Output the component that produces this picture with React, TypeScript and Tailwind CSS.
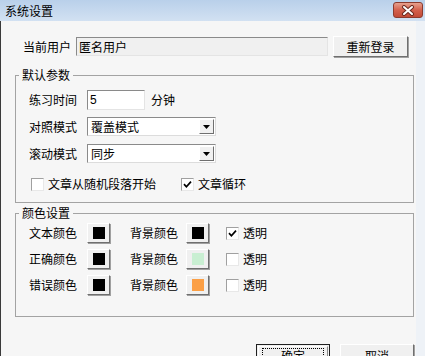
const Check = ({ checked }: { checked?: boolean }) => (
  <span className="flex h-[13px] w-[13px] shrink-0 items-center justify-center border border-t-[#a0a0a0] border-l-[#a0a0a0] border-r-[#e8e8e8] border-b-[#e8e8e8] bg-white">
    {checked && (
      <svg width="9" height="9" viewBox="0 0 9 9">
        <path d="M1 4.2 L3.4 6.8 L8 1.6" stroke="#000" strokeWidth="1.7" fill="none" />
      </svg>
    )}
  </span>
)

const Select = ({ value }: { value: string }) => (
  <div className="flex h-[19px] w-[129px] items-center border border-t-[#8a8a8a] border-l-[#8a8a8a] border-r-[#dcdcdc] border-b-[#dcdcdc] bg-white">
    <span className="flex-1 pl-[3px] leading-[16px]">{value}</span>
    <span className="mr-[1px] flex h-[15px] w-[15px] items-center justify-center border border-t-white border-l-white border-r-[#6f6f6f] border-b-[#6f6f6f] bg-[#f0f0f0]">
      <svg width="7" height="4" viewBox="0 0 7 4">
        <path d="M0 0h7L3.5 4z" fill="#000" />
      </svg>
    </span>
  </div>
)

const Swatch = ({ color }: { color: string }) => (
  <span className="flex h-[20px] w-[23px] items-center justify-center border border-t-white border-l-white border-r-[#6f6f6f] border-b-[#6f6f6f] bg-[#f0f0f0] shadow-[1px_1px_0_#a0a0a0]">
    <span className="h-[12px] w-[12px]" style={{ backgroundColor: color }} />
  </span>
)

const colorRows = [
  { label: "文本颜色", fg: "#000000", bg: "#000000", clear: true },
  { label: "正确颜色", fg: "#000000", bg: "#c9efd2", clear: false },
  { label: "错误颜色", fg: "#000000", bg: "#fb9f45", clear: false },
]

export default function App() {
  return (
    <div className="flex h-[356px] w-[425px] flex-col overflow-hidden font-['Noto_Sans_CJK_SC','Liberation_Sans',sans-serif] text-[12px] leading-[16px] text-black">
      {/* title bar */}
      <div className="flex h-[21px] shrink-0 items-center bg-linear-to-b from-[#b9d0ea] to-[#d2e1f2] pl-[5px]">
        <span>系统设置</span>
        <span className="mr-[2px] ml-auto flex h-[16px] w-[30px] items-center justify-center self-start mt-[2px] rounded-[3px] border border-[#8c3b2e] bg-linear-to-b from-[#e6a08e] via-[#d4604c] to-[#c24a36]">
          <svg width="14" height="11" viewBox="0 0 14 11">
            <path d="M3 2 L11 9 M11 2 L3 9" stroke="#6b2a20" strokeWidth="4" strokeLinecap="round" />
            <path d="M3 2 L11 9 M11 2 L3 9" stroke="#fff" strokeWidth="2" strokeLinecap="round" />
          </svg>
        </span>
      </div>

      <div className="flex flex-1">
        <div className="flex-1 border-l border-[#3a3a3a] bg-[#f6f6f6]">
          {/* current user */}
          <div className="mt-[15px] flex h-[21px] items-center pl-[22px]">
            <span className="w-[53px]">当前用户</span>
            <span className="flex h-[19px] w-[252px] items-center border border-t-[#8a8a8a] border-l-[#8a8a8a] border-r-[#e4e4e4] border-b-[#e4e4e4] bg-[#f0f0f0] pl-[2px]">
              匿名用户
            </span>
            <button className="ml-[5px] flex h-[21px] w-[75px] items-center justify-center border border-t-white border-l-white border-r-[#6f6f6f] border-b-[#6f6f6f] bg-[#f0f0f0] shadow-[1px_1px_0_#a0a0a0]">
              重新登录
            </button>
          </div>

          {/* default params */}
          <fieldset className="mt-[10px] ml-[14px] w-[399px] border border-[#a3a3a3] pb-[5px]">
            <legend className="ml-[3px] px-[3px] leading-[16px]">默认参数</legend>
            <div className="pt-[3px] pl-[13px]">
              <div className="flex h-[27px] items-center">
                <span className="w-[58px]">练习时间</span>
                <span className="flex h-[20px] w-[58px] items-center border border-t-[#8a8a8a] border-l-[#8a8a8a] border-r-[#e4e4e4] border-b-[#e4e4e4] bg-white pl-[2px] font-['Liberation_Sans',sans-serif]">
                  5
                </span>
                <span className="ml-[6px]">分钟</span>
              </div>
              <div className="flex h-[27px] items-center">
                <span className="w-[58px]">对照模式</span>
                <Select value="覆盖模式" />
              </div>
              <div className="flex h-[27px] items-center">
                <span className="w-[58px]">滚动模式</span>
                <Select value="同步" />
              </div>
              <div className="mt-[4px] flex h-[26px] items-center pl-[2px]">
                <Check />
                <span className="ml-[4px] w-[133px]">文章从随机段落开始</span>
                <Check checked />
                <span className="ml-[4px]">文章循环</span>
              </div>
            </div>
          </fieldset>

          {/* colors */}
          <fieldset className="mt-[2px] ml-[14px] w-[399px] border border-[#a3a3a3] pb-[18px]">
            <legend className="ml-[3px] px-[3px] leading-[16px]">颜色设置</legend>
            <div className="-mt-[1px] pl-[13px]">
              {colorRows.map((r) => (
                <div key={r.label} className="flex h-[26px] items-center">
                  <span className="w-[58px]">{r.label}</span>
                  <Swatch color={r.fg} />
                  <span className="ml-[20px] w-[56px]">背景颜色</span>
                  <Swatch color={r.bg} />
                  <span className="ml-[17px]">
                    <Check checked={r.clear} />
                  </span>
                  <span className="ml-[4px]">透明</span>
                </div>
              ))}
            </div>
          </fieldset>

          {/* bottom buttons */}
          <div className="mt-[27px] ml-[14px] flex w-[399px] justify-end gap-[10px]">
            <button className="h-[23px] w-[74px] border border-[#1f1f1f] bg-[#f0f0f0] p-[1px]">
              <span className="flex h-full w-full items-center justify-center border border-t-white border-l-white border-r-[#8a8a8a] border-b-[#8a8a8a]">
                <span className="flex h-[15px] w-[62px] items-center justify-center border border-dotted border-black">确定</span>
              </span>
            </button>
            <button className="flex h-[23px] w-[74px] items-center justify-center border border-t-white border-l-white border-r-[#6f6f6f] border-b-[#6f6f6f] bg-[#f0f0f0] shadow-[1px_1px_0_#a0a0a0]">
              取消
            </button>
          </div>
        </div>
        <div className="w-[9px] bg-[#eef2f7]" />
      </div>
    </div>
  )
}
